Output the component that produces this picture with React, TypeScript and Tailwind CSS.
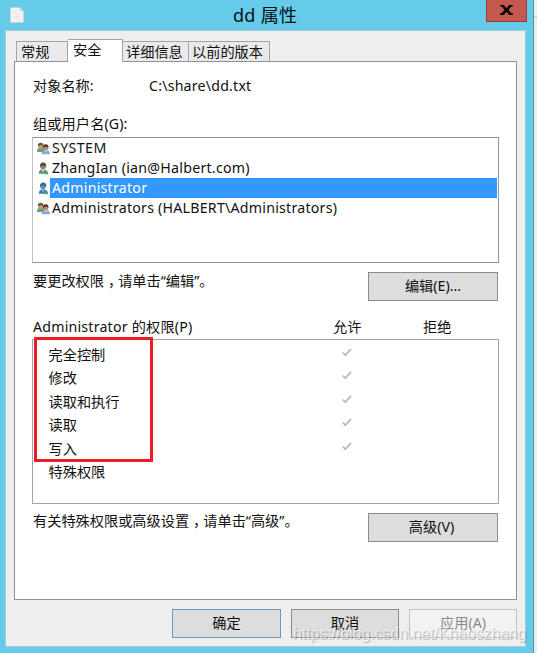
import React from "react";
import clsx from "clsx";

const tabs = [
  { label: "常规", className: "w-[52px] pl-1" },
  { label: "安全", active: true, className: "w-[55px] pl-[5px]" },
  { label: "详细信息", className: "w-[66px] pl-[3px]" },
  { label: "以前的版本", className: "w-[81px] pl-[3px]" },
];

const users = [
  { name: "SYSTEM", icon: "group", className: "tracking-[0.4px]" },
  { name: "ZhangIan (ian@Halbert.com)", icon: "user", className: "tracking-[0.24px]" },
  { name: "Administrator", icon: "admin", selected: true, className: "tracking-[0.24px]" },
  { name: "Administrators (HALBERT\\Administrators)", icon: "group", className: "tracking-[0.23px]" },
];

const permissions = [
  { name: "完全控制", allow: true },
  { name: "修改", allow: true },
  { name: "读取和执行", allow: true },
  { name: "读取", allow: true },
  { name: "写入", allow: true },
  { name: "特殊权限", allow: false },
];

function UserIcon({ type }: { type: string }) {
  if (type === "group") {
    return (
      <svg width="13" height="13" viewBox="0 0 13 13" className="block">
        <path d="M0 10c0-3 1-4.500 3.500-4.500s4.500 1.500 4.500 4.500z" fill="#6f9f6e" />
        <circle cx="3.7" cy="4" r="2.6" fill="#c0a276" />
        <path d="M1 4.500C.5 2 1.800.700 3.800.700s3 1.300 2.500 3.300C4.500 2.700 3 2.900 1 4.500z" fill="#66543f" />
        <path d="M4.500 12.300c0-3 1.800-4.300 4.300-4.300s4.200 1.300 4.200 4.300z" fill="#83aade" />
        <path d="M7.500 8l1.500 2 1.200-2z" fill="#eef3f8" />
        <circle cx="8.700" cy="5.700" r="2.700" fill="#b98e66" />
        <path d="M5.900 6.200c-.4-2.600.800-4 2.800-4s3.200 1.500 2.600 3.700C9.800 4.300 8 4.300 5.900 6.200z" fill="#4b3a2c" />
      </svg>
    );
  }
  const admin = type === "admin";
  return (
    <svg width="13" height="13" viewBox="0 0 13 13" className="block">
      <path d="M1.800 11.800c0-3 1.200-4.600 4.200-4.600s4.800 1.600 4.800 4.600z" fill={admin ? "#4580b8" : "#5c9678"} />
      <path d="M4.500 7.500l1.700 2.400 1.600-2.400z" fill={admin ? "#8bc1e6" : "#e7eee6"} />
      <circle cx="6" cy="4.400" r="2.800" fill={admin ? "#5b91b5" : "#a17e62"} />
      <path d="M3 4.500C2.800 1.700 4.300.500 6.300.500s3.500 1.500 2.800 4.500C7.800 3.200 5.500 3 3 4.500z" fill={admin ? "#36698d" : "#4b4a3d"} />
      <path d="M8 9.800h3v2.400H7z" fill="#57a76b" />
    </svg>
  );
}

function FileIcon() {
  return (
    <svg width="14" height="16" viewBox="0 0 14 16" className="block">
      <path d="M.5.500h9.300l3.700 3.700v11.300H.500z" fill="#f4f5f6" stroke="#c7d0d4" strokeWidth="1" />
      <path d="M9.500.500v4h4z" fill="#d5dade" />
      <path d="M2.500 3.500h6M2.500 5.500h6M2.500 7.500h9M2.500 9.500h9M2.500 11.500h9M2.500 13.500h9" stroke="#e6e9eb" strokeWidth="1" />
    </svg>
  );
}

function Button({ children, className }: { children: React.ReactNode; className?: string }) {
  return (
    <button className={clsx("flex items-center justify-center border pb-px leading-5", className)}>
      {children}
    </button>
  );
}

function Hint({ before, after }: { before: string; after: string }) {
  return (
    <span className="-mt-px pl-px">
      {before}
      <span className="inline-block translate-x-1">，</span>
      {after}
    </span>
  );
}

export default function App() {
  return (
    <div className="relative flex h-[653px] w-[537px] overflow-hidden bg-[#ececee] font-['Noto_Sans','Noto_Sans_CJK_SC',sans-serif] text-[14.2px] leading-5 text-[#111]">
      <div className="flex h-full w-[534px] flex-col border-r border-[#4596b7] bg-[#66cae9]">
        <header className="flex h-[30px] shrink-0 items-start">
          <div className="w-[233px] pt-[7px] pl-[10px]">
            <FileIcon />
          </div>
          <h1 className="w-[253px] pt-[3px] text-[18px] leading-6 tracking-[0.3px] text-[#071018]">dd 属性</h1>
          <button className="flex h-[22px] w-[41px] items-center justify-center border border-t-0 border-[#933f3c] bg-[#c3594f] pb-px">
            <svg width="13" height="10" viewBox="0 0 14 11">
              <path d="M0 0h4l3 3.500L10 0h4v1.500h-1.500L9 5.500l3.500 3.500H14V11h-4L7 7.500 4 11H0V9h1.500L5 5.500 1.500 1.500H0z" fill="#000" />
            </svg>
          </button>
        </header>

        <main className="mx-[5px] mr-[7px] flex h-[617px] flex-col border border-[#a6cbd9] bg-[#efefef] px-2">
          <div className="z-10 ml-[2px] flex h-[31px] shrink-0 items-end">
            {tabs.map((tab) => (
              <div
                key={tab.label}
                className={clsx(
                  "border-t border-r border-[#a3a3a8] whitespace-nowrap",
                  tab.active ? "h-[23px] bg-white" : "mb-px h-5 bg-[#eaeaea]",
                  tab.label === "常规" && "border-l",
                  tab.className
                )}
              >
                {tab.label}
              </div>
            ))}
          </div>

          <section className="-mt-px flex h-[539px] w-[503px] shrink-0 flex-col border border-[#90909b] bg-white pl-[17px]">
            <div className="mt-[14px] flex pl-px">
              <span className="w-[116px]">对象名称:</span>
              <span className="tracking-[0.2px]">C:\share\dd.txt</span>
            </div>
            <div className="mt-[18px] pl-px tracking-[0.1px]">组或用户名(G):</div>

            <div className="mt-[3px] h-[126px] w-[467px] border border-[#92929b] border-l-[#bfbfc8]">
              {users.map((user) => (
                <div key={user.name} className="mr-px flex h-5 items-center pl-1">
                  <UserIcon type={user.icon} />
                  <div
                    className={clsx(
                      "h-5 flex-1 pl-[2px] whitespace-nowrap",
                      user.selected && "bg-[#3398fe] text-white",
                      user.className
                    )}
                  >
                    {user.name}
                  </div>
                </div>
              ))}
            </div>

            <div className="mt-[9px] flex h-[29px] w-[466px] justify-between">
              <Hint before="要更改权限" after="请单击“编辑”。" />
              <Button className="w-[130px] border-[#8b8b8b] bg-[#dddddd]">编辑(E)...</Button>
            </div>

            <div className="mt-4 flex pl-px">
              <span className="w-[300px] tracking-[0.2px]">Administrator 的权限(P)</span>
              <span className="w-[90px]">允许</span>
              <span>拒绝</span>
            </div>

            <div className="relative mt-[2px] h-[165px] w-[467px] border border-[#a4a4a4] pt-[3px]">
              {permissions.map((item) => (
                <div key={item.name} className="flex h-[23.5px] items-center pl-[15.5px]">
                  <span className="w-[293.5px]">{item.name}</span>
                  {item.allow && (
                    <svg width="10" height="9" viewBox="0 0 10 9" className="-mt-[5px]">
                      <path d="M.8 4.500l2.500 2.700L9 1" fill="none" stroke="#b9b9b9" strokeWidth="1.800" />
                    </svg>
                  )}
                </div>
              ))}
              <div className="absolute -top-[3px] left-[1px] h-[125px] w-[119px] border-[3px] border-[#ed1c24]" />
            </div>

            <div className="mt-2 flex h-[30px] w-[466px] justify-between">
              <Hint before="有关特殊权限或高级设置" after="请单击“高级”。" />
              <Button className="mt-px w-[130px] border-[#8b8b8b] bg-[#dddddd] pr-[3px]">高级(V)</Button>
            </div>
          </section>

          <footer className="mt-[9px] flex justify-end gap-[10px]">
            <Button className="h-[29px] w-[109px] border-[#6499c0] bg-[#dddddd]">确定</Button>
            <Button className="h-[29px] w-[108px] border-[#8b8b8b] bg-[#dddddd]">取消</Button>
            <Button className="h-[29px] w-[108px] border-[#c2c2c2] bg-[#f2f2f2] text-[#8a8a8a]">应用(A)</Button>
          </footer>
        </main>
      </div>
      <div className="h-[17px] w-[3px] border-b border-[#c9c9cc] bg-[#f2eff3]" />

      <div className="absolute top-[624px] left-[293px] font-['Liberation_Sans',sans-serif] text-[16px] leading-5 tracking-[-0.1px] whitespace-nowrap text-white/60 [text-shadow:1px_1px_1px_rgba(0,0,0,0.25)]">
        https://blog.csdn.net/Khaoszhang
      </div>
    </div>
  );
}
